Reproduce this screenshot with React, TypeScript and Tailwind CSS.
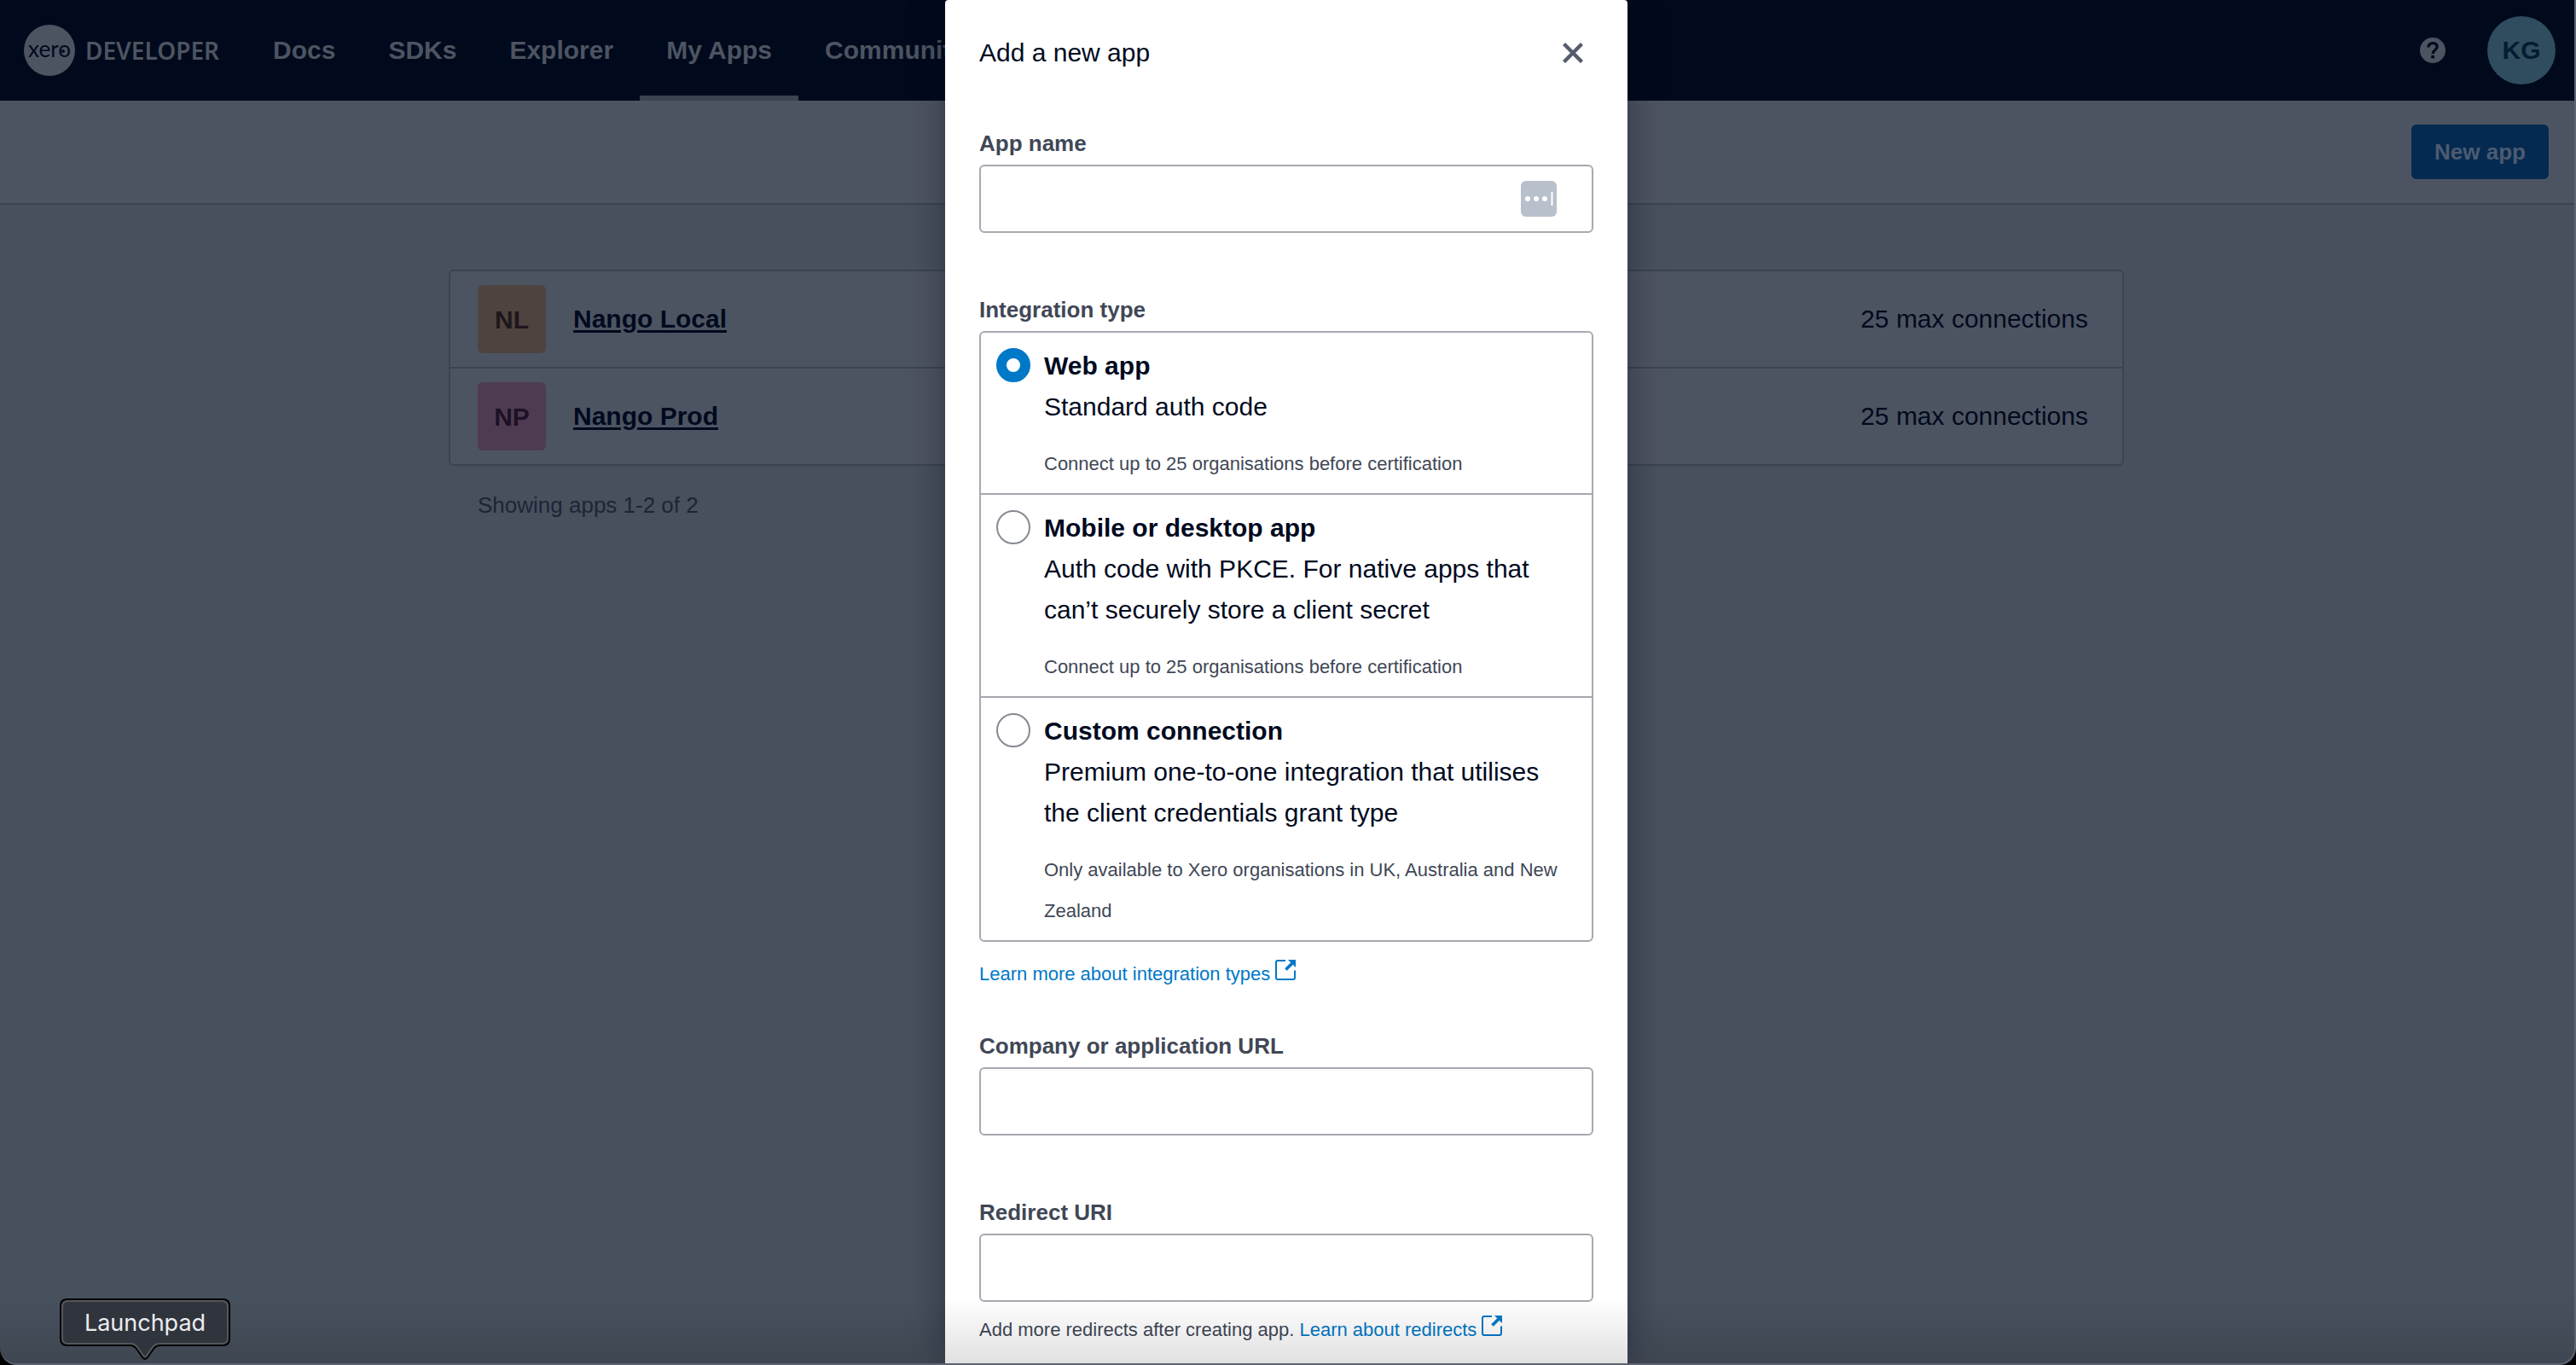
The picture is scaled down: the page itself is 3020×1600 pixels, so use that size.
import React from "react";

const sans = "font-['Liberation_Sans',Arial,sans-serif]";

function XeroLogo() {
  return (
    <a href="#home" className="flex items-center gap-3 pl-7">
      <span className="relative flex h-15 w-15 items-center justify-center rounded-full bg-[#4d5461] pb-1 font-[Lato,sans-serif] text-[26px] leading-[30px] text-[#000a1e]">
        xero
        <span className="absolute right-[12px] top-[29px] h-1 w-1 rounded-full bg-[#000a1e]" />
      </span>
      <span className="font-['Noto_Sans',sans-serif] text-[28px] leading-8 font-semibold text-[#4d5461]">DEVELOPER</span>
    </a>
  );
}

function ExternalIcon() {
  return (
    <svg viewBox="0 0 24 24" className="ml-[6px] inline-block h-6 w-6 align-baseline" fill="none" aria-hidden="true">
      <path d="M12 1H3Q1 1 1 3V21Q1 23 3 23H21Q23 23 23 21V12.5" stroke="#0078c8" strokeWidth="2" />
      <path d="M12.5 11.5L21 3" stroke="#0078c8" strokeWidth="3.8" />
      <path d="M15 0H24V9Z" fill="#0078c8" />
    </svg>
  );
}

const navItems = ["Docs", "SDKs", "Explorer", "My Apps", "Community"];

function Header() {
  return (
    <header className="flex h-[118px] items-stretch bg-[#000a1c]">
      <XeroLogo />
      <nav className="ml-8 flex items-stretch">
        {navItems.map((item) => (
          <a
            key={item}
            href={"#" + item}
            className={
              item === "My Apps"
                ? "flex items-center border-y-[6px] border-t-transparent border-b-[#3a4350] px-[31px] text-[30px] leading-10 font-bold text-[#4d5461]"
                : "flex items-center border-y-[6px] border-transparent px-[31px] text-[30px] leading-10 font-bold text-[#4d5461]"
            }
          >
            {item}
          </a>
        ))}
      </nav>
      <div className="ml-auto flex items-center gap-[49px] pr-[22px]">
        <button aria-label="Help" className="h-[30px] w-[30px]">
          <svg viewBox="0 0 30 30" className="h-[30px] w-[30px]" fill="none" aria-hidden="true">
            <circle cx="15" cy="15" r="15" fill="#4d5461" />
            <path d="M10 11.5C10 5 20.2 5 20.2 10.8C20.2 14.6 15.2 14.6 15.2 19" stroke="#000a1c" strokeWidth="3.2" />
            <rect x="13.2" y="20.8" width="3.8" height="3.6" fill="#000a1c" />
          </svg>
        </button>
        <button className="h-20 w-20 rounded-full bg-[#2f4d5f] text-[30px] leading-10 font-bold text-[#041c30]">KG</button>
      </div>
    </header>
  );
}

const apps = [
  { initials: "NL", name: "Nango Local", tile: "bg-[#4e433f] text-[#1d171b]" },
  { initials: "NP", name: "Nango Prod", tile: "bg-[#4e3b51] text-[#1c1125]" },
];

function AppList() {
  return (
    <main className="mt-[76px] flex justify-center pr-0.5">
      <div className="w-full max-w-[1964px]">
        <ul className="rounded-[6px] border-2 border-[#3b4351] bg-[#4d5461]">
          {apps.map((app) => (
            <li key={app.name} className="flex items-center border-[#3b4351] px-8 py-4 not-first:border-t-2">
              <span className={"flex h-20 w-20 items-center justify-center rounded-[6px] text-[30px] font-bold " + app.tile}>
                {app.initials}
              </span>
              <a
                href={"#" + app.initials}
                className="ml-8 text-[30px] leading-10 font-bold text-[#000a1e] underline decoration-[3px] underline-offset-[3px]"
              >
                {app.name}
              </a>
              <span className="mr-2 ml-auto text-[30px] leading-10 text-[#000a1e]">25 max connections</span>
            </li>
          ))}
        </ul>
        <p className="mt-[30px] pl-[34px] text-[26px] leading-8 text-[#1c2536]">Showing apps 1-2 of 2</p>
      </div>
    </main>
  );
}

const types = [
  {
    id: "web",
    title: "Web app",
    text: "Standard auth code",
    hint: "Connect up to 25 organisations before certification",
  },
  {
    id: "mobile",
    title: "Mobile or desktop app",
    text: "Auth code with PKCE. For native apps that can’t securely store a client secret",
    hint: "Connect up to 25 organisations before certification",
  },
  {
    id: "custom",
    title: "Custom connection",
    text: "Premium one-to-one integration that utilises the client credentials grant type",
    hint: "Only available to Xero organisations in UK, Australia and New Zealand",
  },
];

const labelStyle = "mb-[9px] block text-[26px] leading-8 font-bold text-[#404756]";
const inputStyle = "block h-20 w-full rounded-[6px] border-2 border-[#a6a9b0] bg-transparent px-6 text-[30px] text-[#000a1e] outline-none";

function AddAppDialog() {
  return (
    <section
      role="dialog"
      aria-label="Add a new app"
      className="relative h-full w-full max-w-[800px] overflow-hidden rounded-t-[4px] bg-white px-10 shadow-[0_0_40px_rgba(0,10,30,0.4)]"
    >
      <div className="flex h-[124px] items-center justify-between pr-3">
        <h1 className="text-[30px] leading-10 text-[#000a1e]">Add a new app</h1>
        <button aria-label="Close" className="h-6 w-6">
          <svg viewBox="0 0 24 24" className="h-6 w-6" fill="none" aria-hidden="true">
            <path d="M1.5 1.5L22.5 22.5M22.5 1.5L1.5 22.5" stroke="#565c6d" strokeWidth="4.4" />
          </svg>
        </button>
      </div>
      <form className="pt-7">
        <label htmlFor="name" className={labelStyle}>
          App name
        </label>
        <div className="relative">
          <input id="name" type="text" className={inputStyle} />
          <svg viewBox="0 0 42 42" className="absolute top-[19px] right-[43px] h-[42px] w-[42px]" aria-hidden="true">
            <rect width="42" height="42" rx="6" fill="#b8c0cb" />
            <circle cx="8" cy="21" r="3" fill="#fff" />
            <circle cx="18" cy="21" r="3" fill="#fff" />
            <circle cx="28" cy="21" r="3" fill="#fff" />
            <rect x="35.5" y="13" width="2" height="16" fill="#fff" />
          </svg>
        </div>

        <fieldset className="mt-[74px]">
          <legend className={labelStyle}>Integration type</legend>
          <div className="rounded-[6px] border-2 border-[#a6a9b0]">
            {types.map((t) => (
              <label
                key={t.id}
                htmlFor={t.id}
                className="flex items-start gap-4 border-[#a6a9b0] px-[18px] pt-[15px] pb-[10px] not-first:border-t-2"
              >
                <input
                  id={t.id}
                  type="radio"
                  name="type"
                  defaultChecked={t.id === "web"}
                  className="mt-[3px] h-10 w-10 shrink-0 appearance-none rounded-full border-2 border-[#868a94] checked:border-12 checked:border-[#0078c8]"
                />
                <span className="block text-[30px] leading-[48px] text-[#000a1e]">
                  <span className="block font-bold">{t.title}</span>
                  <span className="block">{t.text}</span>
                  <span className="mt-[19px] block text-[22px] leading-[48px] text-[#404756]">{t.hint}</span>
                </span>
              </label>
            ))}
          </div>
        </fieldset>
        <p className="mt-[14px] text-[22px] leading-[48px]">
          <a href="#types" className="text-[#0078c8]">
            Learn more about integration types
            <ExternalIcon />
          </a>
        </p>

        <label htmlFor="url" className={"mt-11 " + labelStyle}>
          Company or application URL
        </label>
        <input id="url" type="url" className={inputStyle} />

        <label htmlFor="redirect" className={"mt-[74px] " + labelStyle}>
          Redirect URI
        </label>
        <input id="redirect" type="url" className={inputStyle} />
        <p className="mt-[9px] text-[22px] leading-[48px] text-[#404756]">
          Add more redirects after creating app.{" "}
          <a href="#redirects" className="text-[#0078c8]">
            Learn about redirects
            <ExternalIcon />
          </a>
        </p>
      </form>
    </section>
  );
}

function DockTooltip() {
  return (
    <div role="tooltip" className="absolute bottom-0 left-[70px] h-[78px] w-[200px]">
      <svg viewBox="0 0 200 78" className="absolute inset-0 h-[78px] w-[200px]" fill="none" aria-hidden="true">
        <path
          d="M9 1H191Q199 1 199 9V47Q199 55 191 55H118Q113 55 110 59L103 69Q100 73 97 69L90 59Q87 55 82 55H9Q1 55 1 47V9Q1 1 9 1Z"
          fill="#30343d"
          stroke="#000"
          strokeWidth="2"
        />
        <path
          d="M10 3H190Q197 3 197 10V46Q197 53 190 53H117Q112 53 109 57L102 67Q100 70 98 67L91 57Q88 53 83 53H10Q3 53 3 46V10Q3 3 10 3Z"
          stroke="#54565c"
          strokeWidth="2"
        />
      </svg>
      <span className="relative flex h-[58px] items-center justify-center font-[Inter,sans-serif] text-[27px] text-[#ececee]">
        Launchpad
      </span>
    </div>
  );
}

export default function App() {
  return (
    <div className="h-screen bg-black">
      <div className={"relative flex h-full flex-col overflow-hidden rounded-b-[20px] border-r-2 border-b-2 border-[#5d6371] bg-[#47505d] " + sans}>
        <Header />
        <div className="flex h-[122px] items-center justify-end border-b-2 border-[#3b4351] bg-[#4d5461] pr-[30px]">
          <button className="h-16 rounded-[6px] bg-[#042a51] px-[27px] text-[26px] font-bold text-[#4d5b70]">New app</button>
        </div>
        <AppList />
        <div className="absolute inset-0 flex justify-center pr-0.5">
          <AddAppDialog />
        </div>
        <div className="pointer-events-none absolute inset-x-0 bottom-0 h-[76px] bg-linear-to-b from-transparent to-black/12" />
      </div>
      <DockTooltip />
    </div>
  );
}
